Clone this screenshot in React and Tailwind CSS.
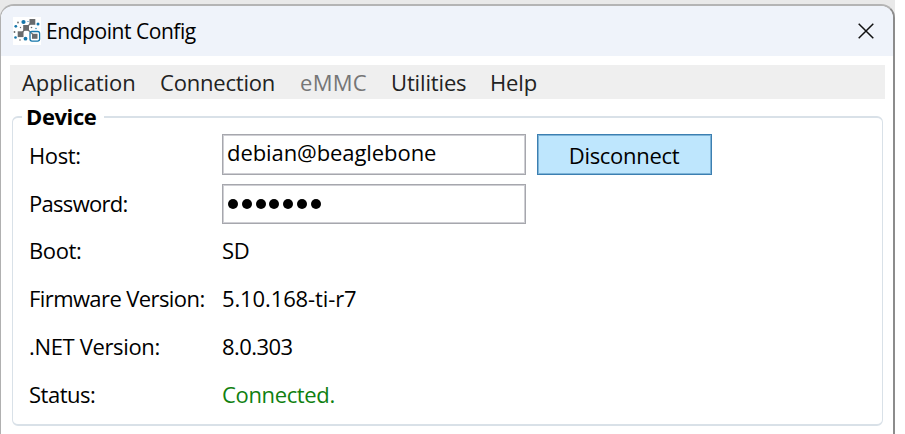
const menu = [
  { label: 'Application', cls: 'w-[138px] tracking-[-0.12px]' },
  { label: 'Connection', cls: 'w-[140px] tracking-[-0.2px]' },
  { label: 'eMMC', cls: 'w-[91px] tracking-[0.3px] text-[#767676]' },
  { label: 'Utilities', cls: 'w-[99px] tracking-[-0.15px]' },
  { label: 'Help', cls: 'tracking-[-0.1px]' },
];

const rows = [
  { label: 'Boot:', value: 'SD', labelCls: '', cls: '' },
  { label: 'Firmware Version:', value: '5.10.168-ti-r7', labelCls: 'tracking-[-0.59px]', cls: 'tracking-[-0.12px]' },
  { label: '.NET Version:', value: '8.0.303', labelCls: 'tracking-[-0.35px]', cls: 'tracking-[-0.55px]' },
  { label: 'Status:', value: 'Connected.', labelCls: 'tracking-[-0.5px]', cls: 'text-[#108010] tracking-[-0.35px]' },
];

function AppIcon() {
  return (
    <svg width="28" height="28" viewBox="0 0 28 28" className="shrink-0 bg-white">
      <path d="M8 17L13 11L19 5M13 11L21.5 19" stroke="#777" strokeWidth="1.2" fill="none" />
      <rect x="17" y="14.5" width="9.6" height="9.6" rx="2" fill="none" stroke="#1677ab" strokeWidth="1.3" />
      <g fill="#696b6d">
        <rect x="16.5" y="2" width="5.8" height="5.8" />
        <rect x="10.2" y="8" width="5.8" height="5.8" />
        <rect x="4.7" y="14.3" width="5.8" height="5.8" />
        <rect x="19" y="16.8" width="5.5" height="5" />
        <circle cx="5" cy="5.5" r=".9" />
        <circle cx="7.5" cy="10.5" r=".7" />
        <circle cx="1.5" cy="15" r=".9" />
        <circle cx="7" cy="23" r=".8" />
        <circle cx="18.5" cy="10.5" r=".8" />
      </g>
      <g fill="#1677ab">
        <circle cx="10.5" cy="5" r="2.1" />
        <circle cx="25" cy="7" r="1.5" />
        <circle cx="2.8" cy="9.3" r="1.4" />
        <circle cx="2.5" cy="20.5" r="1.3" />
        <circle cx="12.5" cy="21.7" r="1.9" />
        <circle cx="15" cy="4.5" r=".6" />
        <circle cx="23" cy="11.5" r=".7" />
      </g>
    </svg>
  );
}

export default function App() {
  return (
    <div className="h-[434px] w-[905px] overflow-hidden bg-white font-['Open_Sans','Noto_Sans',sans-serif] text-[22px] leading-[30px] tracking-[-0.4px] text-black">
      <div className="h-full w-[895px] bg-[#e9e9e9] pt-1">
        <div className="flex h-[440px] flex-col overflow-hidden rounded-t-[14px] border-t-2 border-r-2 border-l border-t-[#b4b4b4] border-r-[#8c8c8c] border-l-[#b0b0b0] bg-white">
          <header className="flex h-[50px] shrink-0 items-center bg-[#eff3fa] pr-[19.5px] pl-3">
            <AppIcon />
            <h1 className="ml-[5px] text-[21px] tracking-[-0.45px]">Endpoint Config</h1>
            <svg width="16" height="16" viewBox="0 0 16 16" className="ml-auto" stroke="#111" strokeWidth="1.5">
              <path d="M.7 .7L15.3 15.3M15.3 .7L.7 15.3" />
            </svg>
          </header>
          <nav className="mt-[9px] mr-2 ml-[9px] flex h-[34px] shrink-0 items-center bg-[#efefef] pl-3 text-[#222]">
            {menu.map((m) => (
              <span key={m.label} className={`shrink-0 whitespace-nowrap ${m.cls}`}>{m.label}</span>
            ))}
          </nav>
          <section className="mt-[17px] mr-[10px] ml-[11px] h-[310px] shrink-0 rounded-md border-x border-y-2 border-[#d9e1e8] pl-4">
            <h2 className="-mt-[17px] -ml-[7px] h-[30px] w-[82px] bg-white pl-1 font-bold">Device</h2>
            <div className="flex h-12 items-center">
              <span className="w-[193px]">Host:</span>
              <div className="-mt-[2px] h-[41px] w-[304px] border border-[#a6a7ad] pt-[2px] pl-1 tracking-[-0.08px] shadow-[inset_0_0_0_1px_#cfcfd4]">debian@beaglebone</div>
              <button className="-mt-[2px] ml-[11px] h-[41px] w-[175px] border border-[#3c7fb1] bg-[#bee6fd] pt-px pr-px tracking-[-0.3px] shadow-[inset_0_0_0_1px_#7db4d8]">Disconnect</button>
            </div>
            <div className="flex h-[47px] items-center">
              <span className="w-[193px] tracking-[-0.7px]">Password:</span>
              <div className="mt-[3px] flex h-10 w-[304px] items-center gap-[3.75px] border border-[#a6a7ad] pl-[5px] shadow-[inset_0_0_0_1px_#cfcfd4]">
                {[0, 1, 2, 3, 4, 5, 6].map((i) => (
                  <span key={i} className="size-[10px] shrink-0 rounded-full bg-black" />
                ))}
              </div>
            </div>
            {rows.map((r) => (
              <div key={r.label} className="flex h-12 items-center whitespace-nowrap">
                <span className={`w-[193px] ${r.labelCls}`}>{r.label}</span>
                <span className={r.cls}>{r.value}</span>
              </div>
            ))}
          </section>
        </div>
      </div>
    </div>
  );
}
